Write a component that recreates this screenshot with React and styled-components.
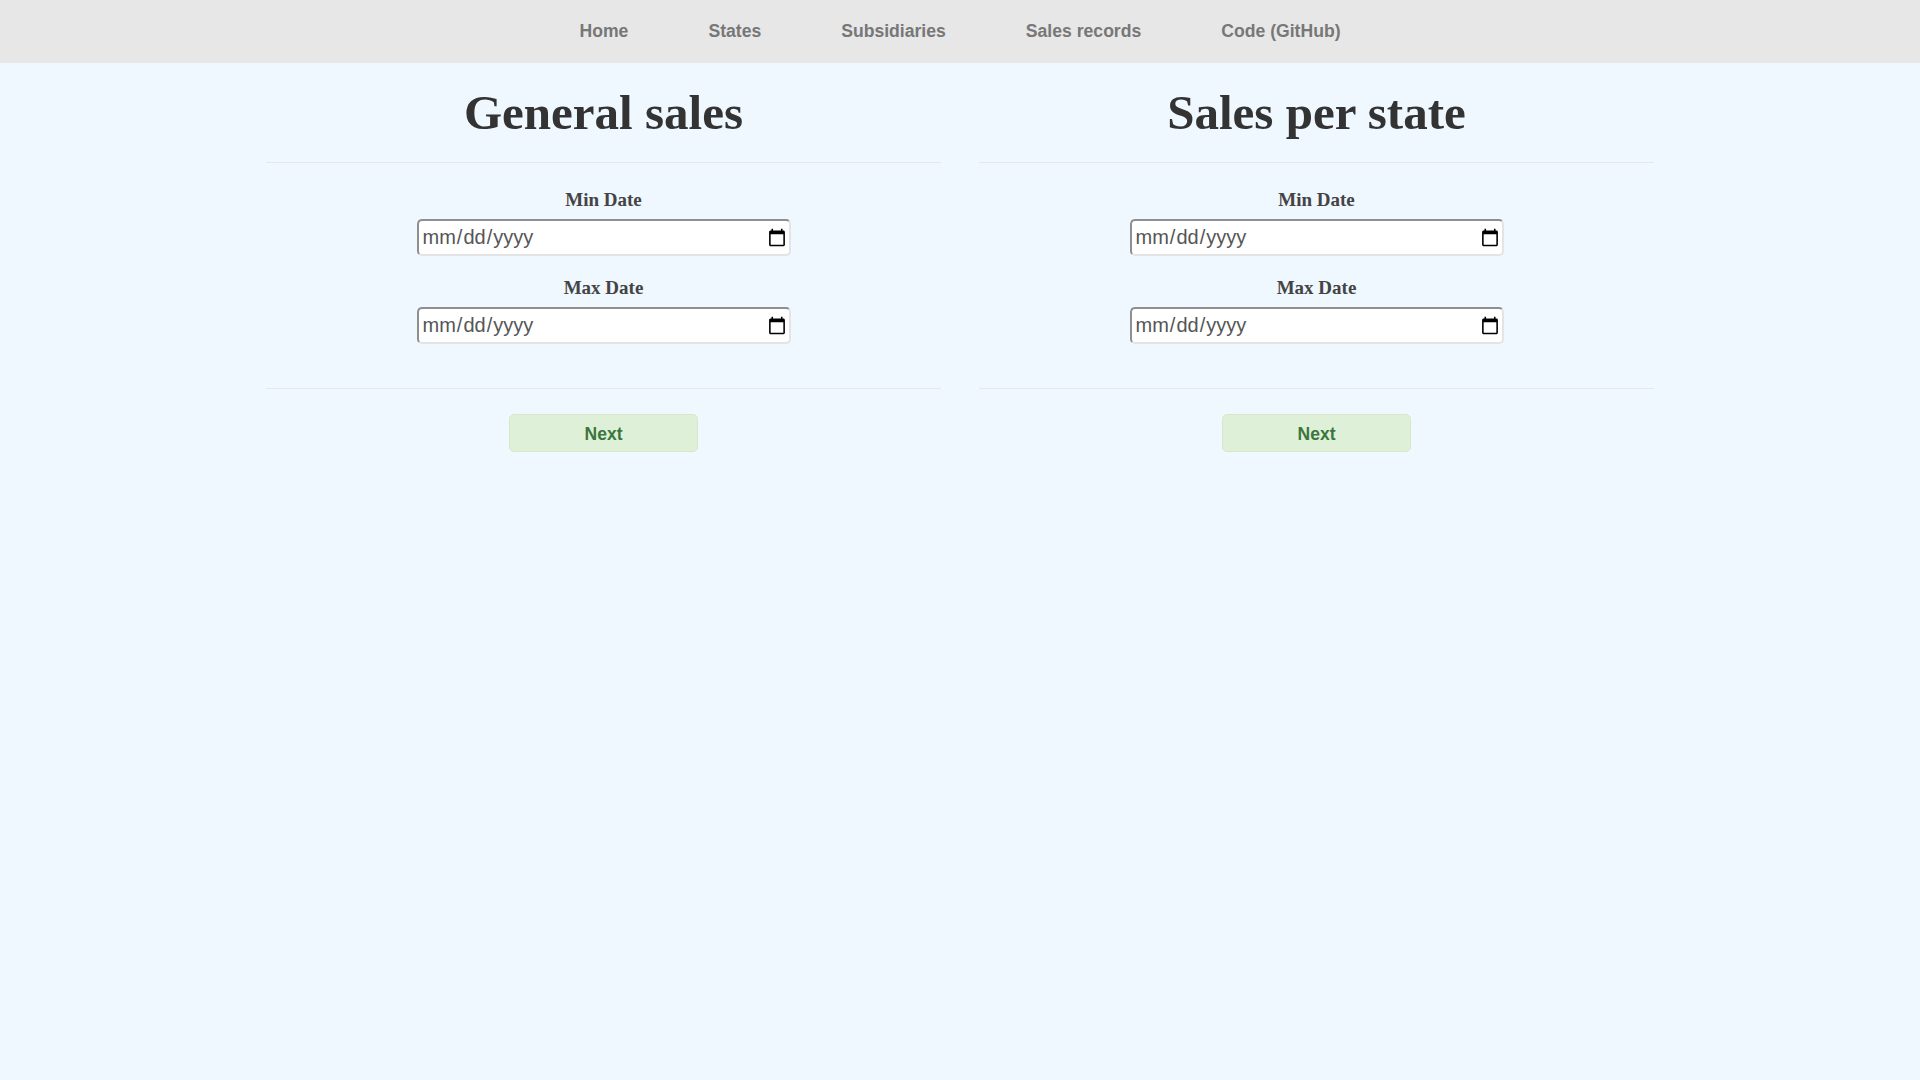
import React from "react";
import styled, { createGlobalStyle } from "styled-components";

const Global = createGlobalStyle`
  html, body { margin: 0; padding: 0; background: #eff7ff; }
  body { font-family: "Liberation Sans", Arial, sans-serif; min-height: 100vh; }
  * { box-sizing: border-box; }
`;

const NavBar = styled.nav`
  height: 63px;
  padding-bottom: 2px;
  background: #e7e7e7;
  display: flex;
  justify-content: center;
  align-items: center;
`;

const NavLink = styled.a`
  padding: 0 40px;
  font-family: "Liberation Sans", Arial, sans-serif;
  font-weight: 700;
  font-size: 17.6px;
  color: #777;
  text-decoration: none;
  line-height: 20px;
`;

const Main = styled.main`
  width: 1388px;
  margin: 0 auto;
  display: grid;
  grid-template-columns: 1fr 1fr;
  column-gap: 38px;
`;

const Column = styled.section`
  display: flex;
  flex-direction: column;
  align-items: stretch;
`;

const Title = styled.h1`
  margin: 20px 0 19px;
  font-family: "Liberation Serif", "Times New Roman", serif;
  font-weight: 700;
  font-size: 49px;
  line-height: 60px;
  color: #333;
  text-align: center;
`;

const Divider = styled.hr`
  margin: 0;
  border: 0;
  height: 1px;
  background: #e4e8ea;
  width: 100%;
`;

const Form = styled.div`
  display: flex;
  flex-direction: column;
  align-items: center;
  padding: 27px 0 44px;
`;

const Label = styled.label`
  font-family: "Liberation Serif", "Times New Roman", serif;
  font-weight: 700;
  font-size: 19px;
  line-height: 20px;
  color: #444;
  margin-top: ${(p) => (p.$first ? "0" : "22px")};
`;

const DateInput = styled.input`
  margin-top: 9px;
  width: 374px;
  height: 37px;
  padding: 0 0 0 3px;
  font-family: "Liberation Sans", Arial, sans-serif;
  font-size: 20px;
  color: #555;
  background: #fff;
  border: 2px solid;
  border-color: #8f8f8f #e4e4e4 #e4e4e4 #8f8f8f;
  border-radius: 5px;
  outline: none;
`;

const ButtonRow = styled.div`
  display: flex;
  justify-content: center;
  padding-top: 25px;
`;

const NextButton = styled.button`
  width: 189px;
  height: 38px;
  padding: 3px 0 0;
  background: #dff0d8;
  border: 1px solid #d6e9c6;
  border-radius: 5px;
  color: #3c763d;
  font-family: "Liberation Sans", Arial, sans-serif;
  font-weight: 700;
  font-size: 17.5px;
  cursor: pointer;
`;

function Panel({ title }) {
  return (
    <Column>
      <Title>{title}</Title>
      <Divider />
      <Form>
        <Label $first>Min Date</Label>
        <DateInput type="date" />
        <Label>Max Date</Label>
        <DateInput type="date" />
      </Form>
      <Divider />
      <ButtonRow>
        <NextButton>Next</NextButton>
      </ButtonRow>
    </Column>
  );
}

export default function App() {
  return (
    <>
      <Global />
      <NavBar>
        <NavLink href="#">Home</NavLink>
        <NavLink href="#">States</NavLink>
        <NavLink href="#">Subsidiaries</NavLink>
        <NavLink href="#">Sales records</NavLink>
        <NavLink href="#">Code (GitHub)</NavLink>
      </NavBar>
      <Main>
        <Panel title="General sales" />
        <Panel title="Sales per state" />
      </Main>
    </>
  );
}
